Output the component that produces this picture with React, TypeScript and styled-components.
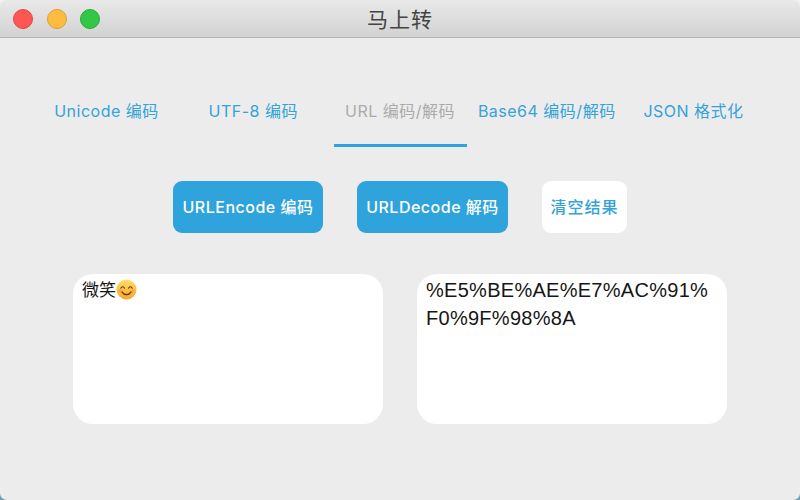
import React from "react";
import styled, { createGlobalStyle } from "styled-components";

const Global = createGlobalStyle`
  html, body, #root { margin: 0; padding: 0; width: 800px; height: 500px; overflow: hidden; }
  body { background: linear-gradient(#f2f2f2 0, #f2f2f2 480px, #6f9fb4 490px); }
  * { box-sizing: border-box; }
`;

const FONT = `Inter, "Noto Sans CJK SC", "Noto Sans", sans-serif`;

const Window = styled.div`
  width: 800px;
  height: 500px;
  border-radius: 7px;
  overflow: hidden;
  background: #ececec;
  display: flex;
  flex-direction: column;
  font-family: ${FONT};
`;

const TitleBar = styled.header`
  position: relative;
  flex: 0 0 38px;
  display: flex;
  align-items: center;
  justify-content: center;
  background: linear-gradient(#e9e9e9, #d2d2d2);
  border-bottom: 1px solid #b4b4b4;
`;

const Lights = styled.div`
  position: absolute;
  left: 13.3px;
  top: 8.5px;
  display: flex;
  gap: 13.3px;
`;

const Light = styled.span<{ $fill: string; $edge: string }>`
  width: 20px;
  height: 20px;
  border-radius: 50%;
  background: ${(p) => p.$fill};
  border: 1px solid ${(p) => p.$edge};
`;

const Title = styled.h1`
  margin: 0;
  padding-top: 3px;
  font-size: 21px;
  font-weight: 400;
  color: #444444;
  line-height: 34px;
  letter-spacing: 1px;
`;

const Tabs = styled.nav`
  display: flex;
  justify-content: space-between;
  padding: 0 40px;
  margin-top: 49px;
`;

const Tab = styled.div<{ $active?: boolean }>`
  display: flex;
  justify-content: center;
  width: 133px;
  height: 60px;
  padding-top: 12px;
  font-size: 16px;
  line-height: 24px;
  letter-spacing: 0.5px;
  white-space: nowrap;
  color: ${(p) => (p.$active ? "#ababab" : "#34a3d9")};
  border-bottom: 3px solid ${(p) => (p.$active ? "#2fa3dc" : "transparent")};
`;

const Actions = styled.div`
  display: flex;
  justify-content: center;
  gap: 34px;
  margin-top: 34px;
`;

const ActionButton = styled.button<{ $plain?: boolean; $width: number }>`
  width: ${(p) => p.$width}px;
  height: 52px;
  padding: 0 0 3px;
  border: 0;
  border-radius: 9px;
  font-family: ${FONT};
  font-size: 16px;
  font-weight: 500;
  letter-spacing: ${(p) => (p.$plain ? 1 : 0.5)}px;
  white-space: nowrap;
  background: ${(p) => (p.$plain ? "#ffffff" : "#2fa3dc")};
  color: ${(p) => (p.$plain ? "#34a3d9" : "#ffffff")};
`;

const Panes = styled.div`
  display: flex;
  justify-content: center;
  gap: 34px;
  margin-top: 41px;
`;

const Pane = styled.div<{ $large?: boolean }>`
  width: 310px;
  height: 150px;
  border-radius: 20px;
  background: #fff;
  color: #161616;
  padding: ${(p) => (p.$large ? "2px 14px 0 9px" : "5px 9px")};
  font-family: ${(p) => (p.$large ? `"Liberation Sans", "Noto Sans CJK SC", sans-serif` : FONT)};
  font-size: ${(p) => (p.$large ? 20 : 17)}px;
  line-height: ${(p) => (p.$large ? 28 : 22)}px;
  letter-spacing: ${(p) => (p.$large ? 0.28 : 0)}px;
  word-break: break-all;
`;

const EmojiIcon = styled.svg`
  width: 21px;
  height: 21px;
  vertical-align: -4px;
`;

const Smile = () => (
  <EmojiIcon viewBox="0 0 24 24" aria-label="😊">
    <defs>
      <linearGradient id="face" x1="0" y1="0" x2="0" y2="1">
        <stop offset="0" stopColor="#ffdf6a" />
        <stop offset="1" stopColor="#f7a52c" />
      </linearGradient>
    </defs>
    <circle cx="12" cy="12" r="11.5" fill="url(#face)" />
    <ellipse cx="5.2" cy="13.8" rx="2.6" ry="1.7" fill="#f58a4a" opacity="0.55" />
    <ellipse cx="18.8" cy="13.8" rx="2.6" ry="1.7" fill="#f58a4a" opacity="0.55" />
    <path d="M5.6 10.4c.8-2.1 3.2-2.1 4 0M14.4 10.4c.8-2.1 3.2-2.1 4 0" fill="none" stroke="#5b3410" strokeWidth="1.3" strokeLinecap="round" />
    <path d="M7 15c2.4 3.8 7.6 3.8 10 0" fill="none" stroke="#5b3410" strokeWidth="1.5" strokeLinecap="round" />
  </EmojiIcon>
);

const tabs = ["Unicode 编码", "UTF-8 编码", "URL 编码/解码", "Base64 编码/解码", "JSON 格式化"];

export default function App() {
  return (
    <>
      <Global />
      <Window>
        <TitleBar>
          <Lights>
            <Light $fill="#fc5753" $edge="#df4744" />
            <Light $fill="#fdbc40" $edge="#de9f34" />
            <Light $fill="#33c748" $edge="#27aa35" />
          </Lights>
          <Title>马上转</Title>
        </TitleBar>
        <Tabs>
          {tabs.map((t, i) => (
            <Tab key={t} $active={i === 2}>{t}</Tab>
          ))}
        </Tabs>
        <Actions>
          <ActionButton $width={150}>URLEncode 编码</ActionButton>
          <ActionButton $width={151}>URLDecode 解码</ActionButton>
          <ActionButton $width={85} $plain>清空结果</ActionButton>
        </Actions>
        <Panes>
          <Pane>微笑<Smile /></Pane>
          <Pane $large>%E5%BE%AE%E7%AC%91%F0%9F%98%8A</Pane>
        </Panes>
      </Window>
    </>
  );
}
